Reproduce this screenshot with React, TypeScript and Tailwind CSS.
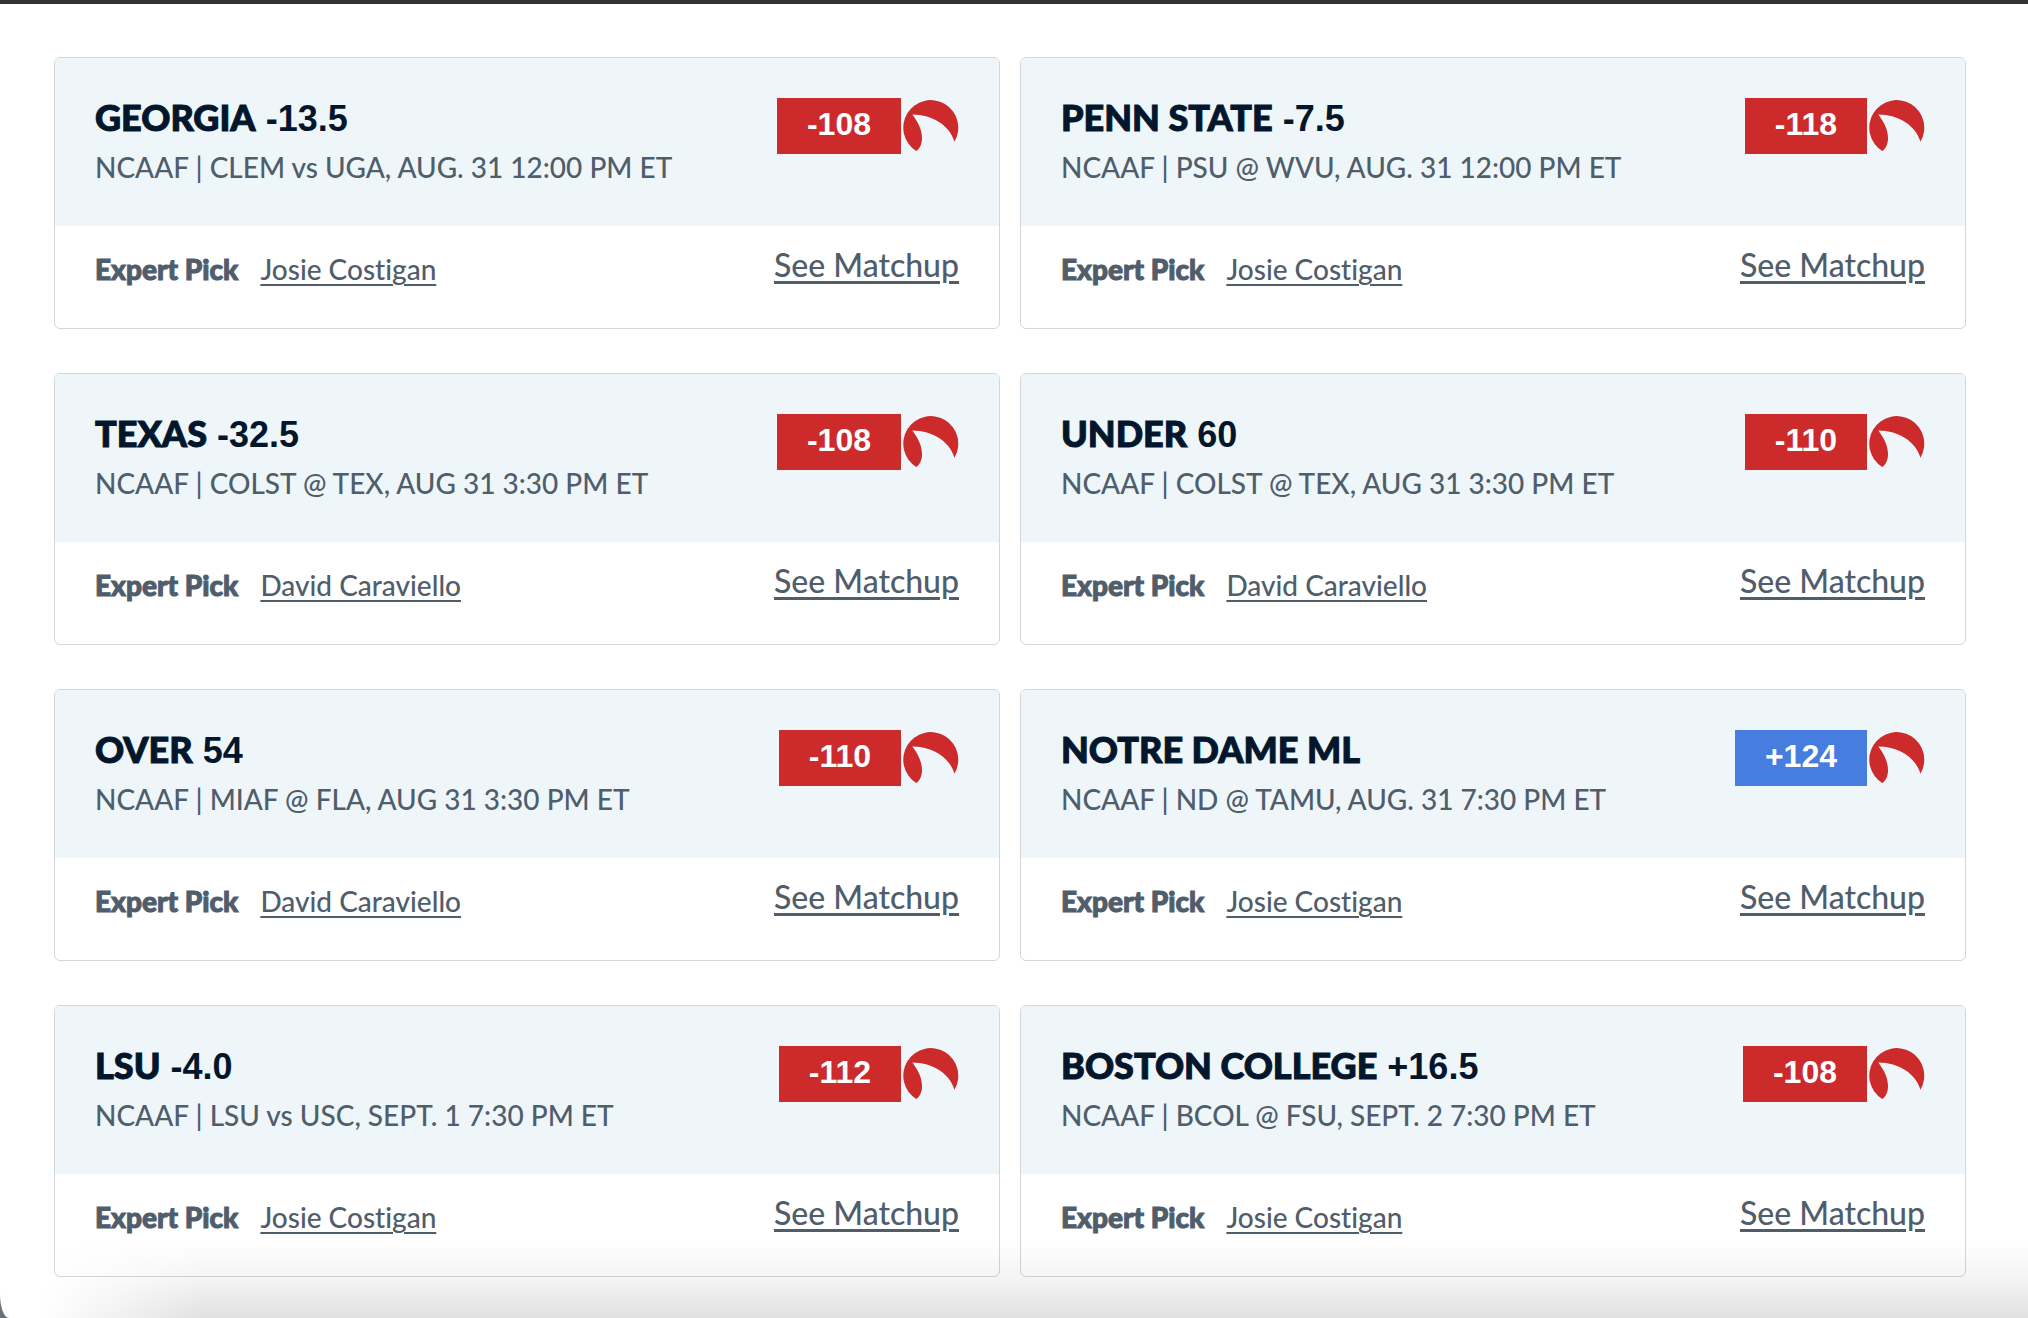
type Pick = {
  team: string
  line: string
  game: string
  odds: string
  expert: string
}

const picks: Pick[] = [
  { team: 'GEORGIA', line: '-13.5', game: 'NCAAF | CLEM vs UGA, AUG. 31 12:00 PM ET', odds: '-108', expert: 'Josie Costigan' },
  { team: 'PENN STATE', line: '-7.5', game: 'NCAAF | PSU @ WVU, AUG. 31 12:00 PM ET', odds: '-118', expert: 'Josie Costigan' },
  { team: 'TEXAS', line: '-32.5', game: 'NCAAF | COLST @ TEX, AUG 31 3:30 PM ET', odds: '-108', expert: 'David Caraviello' },
  { team: 'UNDER', line: '60', game: 'NCAAF | COLST @ TEX, AUG 31 3:30 PM ET', odds: '-110', expert: 'David Caraviello' },
  { team: 'OVER', line: '54', game: 'NCAAF | MIAF @ FLA, AUG 31 3:30 PM ET', odds: '-110', expert: 'David Caraviello' },
  { team: 'NOTRE DAME ML', line: '', game: 'NCAAF | ND @ TAMU, AUG. 31 7:30 PM ET', odds: '+124', expert: 'Josie Costigan' },
  { team: 'LSU', line: '-4.0', game: 'NCAAF | LSU vs USC, SEPT. 1 7:30 PM ET', odds: '-112', expert: 'Josie Costigan' },
  { team: 'BOSTON COLLEGE', line: '+16.5', game: 'NCAAF | BCOL @ FSU, SEPT. 2 7:30 PM ET', odds: '-108', expert: 'Josie Costigan' },
]

function BookLogo() {
  return (
    <svg className="ml-[2px] h-14 w-14 shrink-0" viewBox="0 -2 56 56" aria-hidden="true">
      <path
        fill="#cd2a2b"
        d="M13.3 51 A27.5 27.5 0 1 1 51.4 41.7 C47 26 30 14.5 9.3 14.5 C13.5 20 19 28.5 19 38 C19 44 17 48.5 13.3 51 Z"
      />
    </svg>
  )
}

function PickCard({ pick }: { pick: Pick }) {
  const favorite = pick.odds.startsWith('-')

  return (
    <article className="overflow-hidden rounded-md border border-[#d3d7db] bg-white">
      <div className="flex items-start justify-between bg-[#eef6fa] p-10">
        <div>
          <h2 className="text-[36px] leading-[38px] font-black text-[#04162c]">
            <span className="[-webkit-text-stroke:1px]">{pick.team}</span>
            {pick.line && (
              <span className="font-['Liberation_Sans',sans-serif] leading-0 font-bold"> {pick.line}</span>
            )}
          </h2>
          <p className="mt-3 text-[28px] leading-[38px] font-medium">{pick.game}</p>
        </div>
        <div className="flex items-start">
          <span
            className={`px-[30px] pb-1 font-['Liberation_Sans',sans-serif] text-[32px] leading-[52px] font-bold text-white ${
              favorite ? 'bg-[#cd2a2b]' : 'bg-[#467ddf]'
            }`}
          >
            {pick.odds}
          </span>
          <BookLogo />
        </div>
      </div>

      <div className="flex items-start justify-between px-10 pt-[19px] pb-[39px]">
        <div className="mt-1 flex gap-[22px] text-[28px] leading-10">
          <span className="font-black [-webkit-text-stroke:1px]">Expert Pick</span>
          <a href="#" className="font-medium underline decoration-2 underline-offset-4">{pick.expert}</a>
        </div>
        <a href="#" className="text-[32px] leading-10 font-medium underline decoration-3 underline-offset-4">
          See Matchup
        </a>
      </div>
    </article>
  )
}

export default function App() {
  return (
    <div className="min-h-screen bg-[#6a7078] font-['Lato',sans-serif] text-[#505d6b] [font-variant-ligatures:none]">
      <div className="h-1 bg-[#333333]" />
      <main className="relative overflow-hidden bg-white pt-[53px] pr-[62px] pb-[41px] pl-[54px] [border-bottom-left-radius:9px_24px]">
        <div className="grid grid-cols-2 gap-x-5 gap-y-11">
          {picks.map((pick) => (
            <PickCard key={`${pick.team}${pick.line}`} pick={pick} />
          ))}
        </div>
        {/* soft shade along the bottom edge */}
        <div className="pointer-events-none absolute right-0 bottom-0 left-0 h-20 bg-linear-to-t from-black/12 via-black/4 to-transparent mask-l-from-90% mask-l-to-98%" />
      </main>
    </div>
  )
}
